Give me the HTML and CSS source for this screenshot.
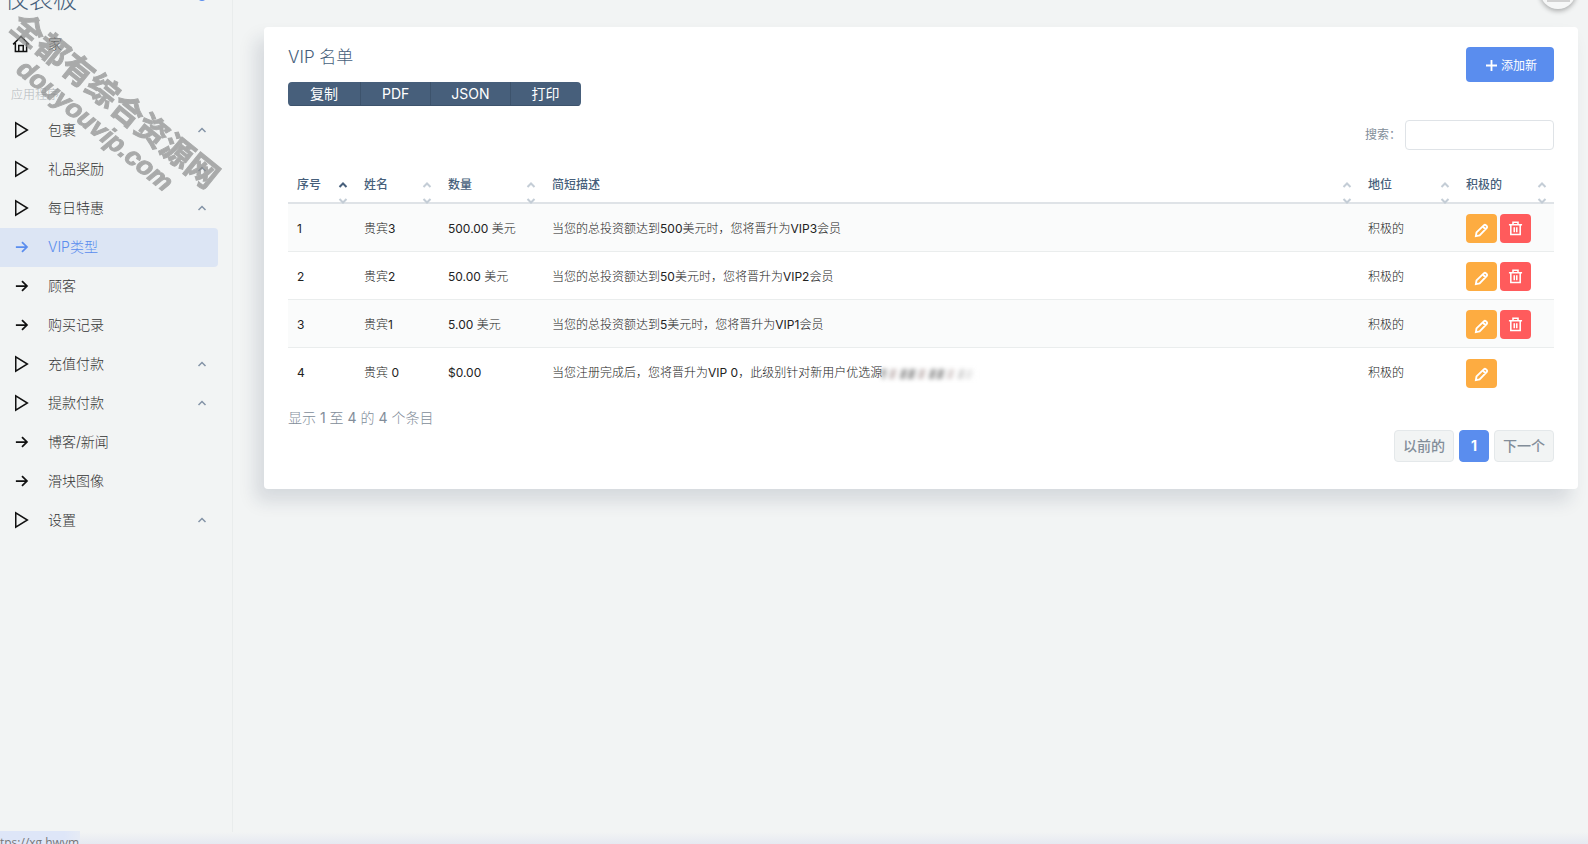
FILE: index.html
```html
<!DOCTYPE html>
<html lang="zh-CN">
<head>
<meta charset="utf-8">
<title>VIP 名单</title>
<link rel="stylesheet" href="styles.css">
</head>
<body>
<svg class="sprite" aria-hidden="true">
  <symbol id="play" viewBox="0 0 24 24"><path d="M5 2.500v19L20.500 12z"/></symbol>
  <symbol id="arrow" viewBox="0 0 24 24"><path d="M1.500 12h19M12 3.500l8.500 8.500-8.500 8.500"/></symbol>
  <symbol id="home" viewBox="0 0 24 24"><path d="M1.500 12.500L12 2l10.500 10.500M4.500 10.500V22h15V10.500M9 21.500v-7.500h6v7.500"/></symbol>
  <symbol id="up" viewBox="0 0 10 10"><path d="M1.500 7L5 3.500 8.500 7"/></symbol>
  <symbol id="sort" viewBox="0 0 10 12"><path class="asc" d="M1.500 8L5 4.500 8.500 8"/><path d="M1.500 20L5 23.500 8.500 20"/></symbol>
  <symbol id="pencil" viewBox="0 0 24 24"><path d="M3 21l1-6L16 3.500q1.500-1.200 3 0l1.500 1.500q1.200 1.500 0 3L9 20zM14.500 6l4 4"/></symbol>
  <symbol id="trash" viewBox="0 0 24 24"><path d="M1.500 6h21M4.500 6.500v15h15V6.500M8 5.500V2h8v3.500M10 10v8M14 10v8"/></symbol>
  <symbol id="plus" viewBox="0 0 12 12"><path d="M6 0v12M0 6h12"/></symbol>
</svg>

<aside class="sidebar">
  <div class="brand"><span>仪表板</span><i class="toggle"></i></div>
  <nav class="menu">
    <a class="item" href="#"><svg class="icon"><use href="#home"/></svg><span>家</span></a>
    <div class="section">应用程序</div>
    <a class="item" href="#"><svg class="icon"><use href="#play"/></svg><span>包裹</span><svg class="caret"><use href="#up"/></svg></a>
    <a class="item" href="#"><svg class="icon"><use href="#play"/></svg><span>礼品奖励</span><svg class="caret"><use href="#up"/></svg></a>
    <a class="item" href="#"><svg class="icon"><use href="#play"/></svg><span>每日特惠</span><svg class="caret"><use href="#up"/></svg></a>
    <a class="item active" href="#"><svg class="icon small"><use href="#arrow"/></svg><span>VIP类型</span></a>
    <a class="item" href="#"><svg class="icon small"><use href="#arrow"/></svg><span>顾客</span></a>
    <a class="item" href="#"><svg class="icon small"><use href="#arrow"/></svg><span>购买记录</span></a>
    <a class="item" href="#"><svg class="icon"><use href="#play"/></svg><span>充值付款</span><svg class="caret"><use href="#up"/></svg></a>
    <a class="item" href="#"><svg class="icon"><use href="#play"/></svg><span>提款付款</span><svg class="caret"><use href="#up"/></svg></a>
    <a class="item" href="#"><svg class="icon small"><use href="#arrow"/></svg><span>博客/新闻</span></a>
    <a class="item" href="#"><svg class="icon small"><use href="#arrow"/></svg><span>滑块图像</span></a>
    <a class="item" href="#"><svg class="icon"><use href="#play"/></svg><span>设置</span><svg class="caret"><use href="#up"/></svg></a>
  </nav>
</aside>

<main class="content">
  <section class="card">
    <header class="card-head">
      <div>
        <h1>VIP 名单</h1>
        <div class="exports">
          <button type="button">复制</button><button type="button">PDF</button><button type="button">JSON</button><button type="button">打印</button>
        </div>
      </div>
      <button type="button" class="add"><svg><use href="#plus"/></svg>添加新</button>
    </header>
    <div class="search"><label for="q">搜索：</label><input id="q" type="search"></div>
    <table>
      <colgroup><col class="c-no"><col class="c-name"><col class="c-sum"><col><col class="c-state"><col class="c-act"></colgroup>
      <thead>
        <tr>
          <th class="sorted"><div>序号<svg><use href="#sort"/></svg></div></th>
          <th><div>姓名<svg><use href="#sort"/></svg></div></th>
          <th><div>数量<svg><use href="#sort"/></svg></div></th>
          <th><div>简短描述<svg><use href="#sort"/></svg></div></th>
          <th><div>地位<svg><use href="#sort"/></svg></div></th>
          <th><div>积极的<svg><use href="#sort"/></svg></div></th>
        </tr>
      </thead>
      <tbody>
        <tr><td>1</td><td>贵宾<b>3</b></td><td><b>500.00</b> 美元</td><td>当您的总投资额达到<b>500</b>美元时，您将晋升为<b>VIP3</b>会员</td><td>积极的</td>
          <td><div class="actions"><button type="button" class="edit" aria-label="编辑"><svg><use href="#pencil"/></svg></button><button type="button" class="delete" aria-label="删除"><svg><use href="#trash"/></svg></button></div></td></tr>
        <tr><td>2</td><td>贵宾<b>2</b></td><td><b>50.00</b> 美元</td><td>当您的总投资额达到<b>50</b>美元时，您将晋升为<b>VIP2</b>会员</td><td>积极的</td>
          <td><div class="actions"><button type="button" class="edit" aria-label="编辑"><svg><use href="#pencil"/></svg></button><button type="button" class="delete" aria-label="删除"><svg><use href="#trash"/></svg></button></div></td></tr>
        <tr><td>3</td><td>贵宾<b>1</b></td><td><b>5.00</b> 美元</td><td>当您的总投资额达到<b>5</b>美元时，您将晋升为<b>VIP1</b>会员</td><td>积极的</td>
          <td><div class="actions"><button type="button" class="edit" aria-label="编辑"><svg><use href="#pencil"/></svg></button><button type="button" class="delete" aria-label="删除"><svg><use href="#trash"/></svg></button></div></td></tr>
        <tr><td>4</td><td>贵宾 <b>0</b></td><td><b>$0.00</b></td><td>当您注册完成后，您将晋升为<b>VIP 0</b>，此级别针对新用户优选源<i class="smudge"></i></td><td>积极的</td>
          <td><div class="actions"><button type="button" class="edit" aria-label="编辑"><svg><use href="#pencil"/></svg></button></div></td></tr>
      </tbody>
    </table>
    <p class="info">显示 <b>1</b> 至 <b>4</b> 的 <b>4</b> 个条目</p>
    <nav class="pages"><button type="button">以前的</button><button type="button" class="current">1</button><button type="button">下一个</button></nav>
  </section>
</main>

<div class="avatar"></div>
<div class="watermark"><div class="site">全都有综合资源网</div><div class="domain">douyouvip.com</div></div>
<div class="haze"></div>
<div class="status">tps://xg.hwvm</div>
</body>
</html>
```
FILE: styles.css
```css
* { box-sizing: border-box; }
body {
  margin: 0;
  min-height: 100vh;
  display: flex;
  position: relative;
  overflow: hidden;
  background: #f2f4f4;
  color: #333;
  font: 300 14px/20px Inter, "Noto Sans CJK SC", sans-serif;
}
button, input { font: inherit; }
b { font-weight: 400; }
svg { flex: none; fill: none; stroke: currentColor; stroke-width: 2; overflow: visible; }
symbol { overflow: visible; }
.sprite { position: absolute; width: 0; height: 0; }

/* Sidebar */
.sidebar { flex: none; width: 233px; border-right: 1px solid #e9ecec; }
.brand {
  height: 13px;
  display: flex;
  align-items: flex-end;
  justify-content: space-between;
  padding: 0 25px 0 5px;
  color: #475f7b;
  font-size: 24px;
  line-height: 26px;
}
.toggle { width: 10px; height: 10px; margin-bottom: 12px; border-radius: 50%; background: #5a8dee; }
.menu { padding: 12px 14px 0 0; }
.item {
  height: 39px;
  display: flex;
  align-items: center;
  padding: 0 11px 2px 12px;
  border-radius: 0 4px 4px 0;
  color: #333;
  text-decoration: none;
}
.item span { flex: 1; }
.icon { width: 18px; height: 18px; margin-right: 18px; color: #111; }
.icon.small { width: 14px; height: 14px; margin: 0 19px 0 3px; stroke-width: 3; }
.caret { width: 10px; height: 10px; color: #8494a7; stroke-width: 1.5; }
.active, .active .icon { color: #5a8dee; }
.active { background: #dce5f4; }
.section { padding: 21px 0 6px 11px; color: #b4b9bd; font-size: 12px; }

/* Card */
.content { flex: 1; min-width: 0; padding: 27px 10px 40px 31px; }
.card {
  padding: 20px 24px 27px;
  border-radius: 4px;
  background: #fff;
  box-shadow: -8px 12px 18px 0 rgba(25, 42, 70, .13);
}
.card-head { display: flex; justify-content: space-between; align-items: flex-start; }
h1 { margin: 0 0 15px; color: #475f7b; font-size: 17px; font-weight: 300; line-height: 20px; }
.exports { display: flex; border-radius: 4px; overflow: hidden; }
.exports button {
  height: 24px;
  padding: 0 21px;
  border: 1px solid #3d536c;
  border-width: 0 0 1px;
  background: #475f7b;
  color: #fff;
  font-weight: 400;
  line-height: 20px;
}
.exports button:first-child { padding: 0 22px; }
.exports button:nth-child(3) { padding: 0 20px; }
.exports button + button { border-left-width: 1px; }
.add {
  height: 35px;
  display: flex;
  align-items: center;
  gap: 4px;
  padding: 2px 17px 0 20px;
  border: 0;
  border-radius: 4px;
  background: #5a8dee;
  color: #fff;
  font-size: 12px;
  font-weight: 400;
}
.add svg { width: 11px; height: 11px; }
.search {
  display: flex;
  justify-content: flex-end;
  align-items: center;
  gap: 4px;
  margin-top: 14px;
  color: #828d99;
  font-size: 12px;
  font-weight: 400;
}
.search input { width: 149px; height: 30px; border: 1px solid #dfe3e7; border-radius: 4px; outline: 0; background: #fff; }

/* Table */
table { width: 100%; margin-top: 15px; border-collapse: separate; border-spacing: 0; table-layout: fixed; font-size: 12px; }
.c-no { width: 67px; }
.c-name { width: 84px; }
.c-sum { width: 104px; }
.c-state { width: 98px; }
.c-act { width: 97px; }
th {
  height: 39px;
  padding: 10px 7px 0 9px;
  border-bottom: 2px solid #dfe3e7;
  color: #475f7b;
  font-weight: 500;
  text-align: left;
  vertical-align: top;
}
th div { display: flex; justify-content: space-between; align-items: center; }
th svg { width: 10px; height: 12px; color: #c4cdd6; }
.sorted use { --asc: #475f7b; }
.asc { stroke: var(--asc, currentColor); }
td { height: 48px; padding: 2px 9px 0; border-bottom: 1px solid #eaeded; white-space: nowrap; color: #222; }
td:first-child { font-weight: 400; }
td:last-child { padding-right: 0; }
tbody tr:nth-child(odd) td { background: #fafbfb; }
tbody tr:last-child td { border-bottom: 0; }
.actions { display: flex; gap: 3px; }
.actions button {
  width: 31px;
  height: 29px;
  display: flex;
  align-items: center;
  justify-content: center;
  padding: 0;
  border: 0;
  border-radius: 4px;
  color: #fff;
}
.actions svg { width: 15px; height: 15px; stroke-width: 3; }
.actions .edit { background: #fdac41; }
.actions .edit svg { margin-top: 3px; }
.actions .delete { background: #ff5b5c; }
.actions .delete svg { stroke-width: 2.5; }
.smudge {
  display: inline-block;
  width: 96px;
  height: 10px;
  vertical-align: middle;
  background: linear-gradient(90deg, transparent 60%, #fff), repeating-linear-gradient(105deg, #777 0 3px, #eee 5px 9px, #b9a9a8 11px 13px, #fff 15px 19px, #888 20px 23px, #ddd 25px 28px);
  filter: blur(2px);
  opacity: .8;
}
.info { margin: 12px 0 2px; color: #828d99; }
.pages { display: flex; justify-content: flex-end; gap: 5px; }
.pages button {
  height: 32px;
  padding: 0 8px;
  border: 1px solid #e4e8ea;
  border-radius: 4px;
  background: #f2f4f4;
  color: #828d99;
  font-weight: 500;
}
.pages .current { width: 30px; border-color: #5a8dee; background: #5a8dee; color: #fff; font-weight: 700; }

/* Overlays */
.avatar {
  position: absolute;
  top: -27px;
  right: 12px;
  width: 36px;
  height: 36px;
  border-radius: 50%;
  background: #f6f7f7;
  box-shadow: 0 2px 5px rgba(0, 0, 0, .3);
}
.avatar::after { content: ""; position: absolute; left: 7px; right: 6px; bottom: 7px; border-bottom: 2px solid #d2d2d2; }
.watermark {
  position: absolute;
  top: 78px;
  left: -22px;
  width: 256px;
  color: #8b8c8c;
  opacity: .7;
  text-align: center;
  font-weight: 700;
  line-height: 34px;
  white-space: nowrap;
  transform: rotate(39deg);
  pointer-events: none;
}
.site { font-family: "Noto Sans CJK SC", sans-serif; font-size: 32px; -webkit-text-stroke: 1px #8b8c8c; }
.domain { font-family: "Liberation Sans", sans-serif; font-size: 26px; font-style: italic; -webkit-text-stroke: 1px #8b8c8c; }
.haze { position: absolute; left: 0; right: 0; bottom: 0; height: 12px; background: linear-gradient(#f2f4f4, #e6e9f1); }
.status {
  position: absolute;
  left: 0;
  bottom: 0;
  width: 80px;
  height: 13px;
  padding-top: 3px;
  overflow: hidden;
  background: linear-gradient(90deg, #dee6f8 80%, #e6ebf5);
  color: #777;
  font: 12px/18px "Open Sans", sans-serif;
}
```
